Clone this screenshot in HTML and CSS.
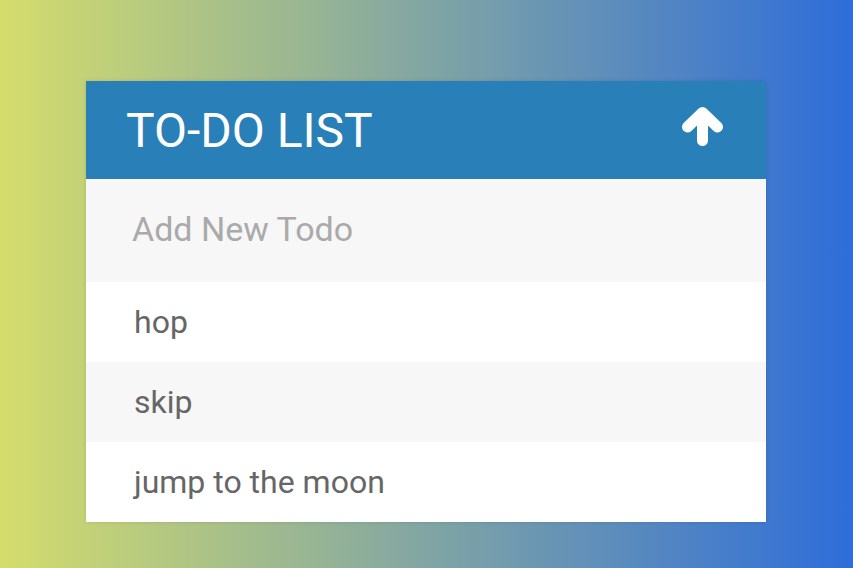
FILE: index.html
```html
<!DOCTYPE html>
<html lang="en">
<head>
<meta charset="utf-8">
<title>To-Do List</title>
<link rel="stylesheet" href="styles.css">
</head>
<body>
<div class="card">
  <div class="header">
    <h1 class="title">TO-DO LIST</h1>
    <svg class="toggle" width="44" height="42" viewBox="0 0 44 42" aria-hidden="true">
      <path d="M21.5 9 V35.5 M6.5 22 L21.5 7.5 L36.5 22" fill="none" stroke="#fff" stroke-width="11" stroke-linecap="round" stroke-linejoin="round"/>
    </svg>
  </div>
  <input class="new-todo" type="text" placeholder="Add New Todo">
  <ul class="list">
    <li class="item">hop</li>
    <li class="item alt">skip</li>
    <li class="item">jump to the moon</li>
  </ul>
</div>
</body>
</html>
```
FILE: styles.css
```css
html, body {
  margin: 0;
  padding: 0;
  height: 100%;
}
body {
  background: linear-gradient(to right, #d4dd6c, #2e6dda);
  font-family: Roboto, "Noto Sans", sans-serif;
  padding-top: 81px;
  box-sizing: border-box;
}
.card {
  width: 680px;
  margin-left: 86px;
  background: #fff;
  box-shadow: 0 0 4px rgba(0, 0, 0, 0.12);
}
.header {
  height: 98px;
  background: #2980b9;
  display: flex;
  align-items: center;
  justify-content: space-between;
  padding: 0 41px 0 40px;
}
.title {
  margin: 0;
  font-weight: 400;
  font-size: 48px;
  color: #fff;
  letter-spacing: 0;
}
.toggle {
  display: block;
  margin-top: -9px;
}
.new-todo {
  display: block;
  width: 100%;
  box-sizing: border-box;
  height: 103px;
  border: none;
  outline: none;
  background: #f7f7f7;
  padding: 0 46px 3px;
  font-family: Roboto, "Noto Sans", sans-serif;
  font-size: 34px;
  color: #666;
}
.new-todo::placeholder {
  color: #aaa;
}
.list {
  list-style: none;
  margin: 0;
  padding: 0;
}
.item {
  height: 80px;
  display: flex;
  align-items: center;
  padding: 0 48px;
  font-size: 32px;
  color: #666;
  background: #fff;
}
.item.alt {
  background: #f7f7f7;
}
```
